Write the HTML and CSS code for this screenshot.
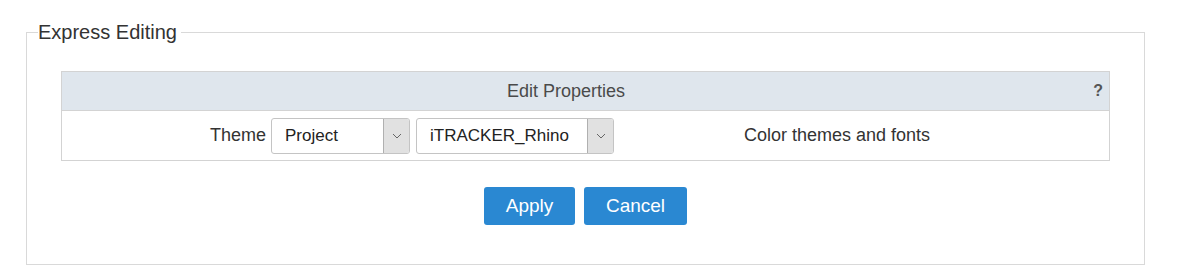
FILE: index.html
```html
<!DOCTYPE html>
<html>
<head>
<meta charset="utf-8">
<link rel="stylesheet" href="styles.css">
</head>
<body>
<fieldset class="panel">
  <legend class="panel-title">Express Editing</legend>
  <div class="props">
    <div class="props-head">
      <span class="props-title">Edit Properties</span>
      <span class="help">?</span>
    </div>
    <div class="props-row">
      <div class="cell-label">Theme</div>
      <div class="cell-editor">
        <div class="dropdown dd-project"><span class="dd-text">Project</span><span class="dd-arrow"><svg width="10" height="6" viewBox="0 0 10 6"><path d="M1 1 L5 5 L9 1" fill="none" stroke="#666" stroke-width="1"/></svg></span></div>
        <div class="dropdown dd-theme"><span class="dd-text">iTRACKER_Rhino</span><span class="dd-arrow"><svg width="10" height="6" viewBox="0 0 10 6"><path d="M1 1 L5 5 L9 1" fill="none" stroke="#666" stroke-width="1"/></svg></span></div>
      </div>
      <div class="cell-desc">Color themes and fonts</div>
    </div>
  </div>
  <div class="actions">
    <button class="btn btn-apply">Apply</button>
    <button class="btn btn-cancel">Cancel</button>
  </div>
</fieldset>
</body>
</html>
```
FILE: styles.css
```css
html, body {
  margin: 0;
  padding: 0;
  background: #fff;
  font-family: "Liberation Sans", Arial, sans-serif;
  color: #333;
}
body {
  padding: 21px 0 0 26px;
  width: 1119px;
}
.panel {
  margin: 0;
  padding: 0 34px 0 34px;
  border: 1px solid #d9d9d9;
  min-width: 0;
  box-sizing: border-box;
  width: 1119px;
  height: 244px;
}
.panel-title {
  font-size: 20px;
  line-height: 23px;
  padding: 0 4px 0 0;
  margin-left: -23px;
  color: #333;
}
.props {
  margin-top: 27px;
  border: 1px solid #d3d3d3;
}
.props-head {
  height: 38px;
  background: #dfe6ed;
  display: flex;
  align-items: center;
  justify-content: center;
  position: relative;
  border-bottom: 1px solid #d3d3d3;
  padding-right: 39px;
}
.props-title {
  font-size: 18px;
  color: #4a4a4a;
}
.help {
  position: absolute;
  right: 6px;
  top: 10px;
  font-size: 16px;
  font-weight: bold;
  color: #555;
}
.props-row {
  height: 49px;
  display: grid;
  grid-template-columns: 209px 474px 1fr;
  align-items: center;
  font-size: 18px;
}
.cell-label {
  text-align: right;
  padding-right: 5px;
  color: #333;
}
.cell-editor {
  display: flex;
  gap: 6px;
}
.dropdown {
  height: 36px;
  box-sizing: border-box;
  border: 1px solid #c4c4c4;
  border-radius: 3px;
  display: flex;
  align-items: center;
  justify-content: space-between;
  background: #fff;
  overflow: hidden;
}
.dd-project { width: 139px; }
.dd-theme { width: 198px; }
.dd-text {
  padding-left: 13px;
  font-size: 17px;
  color: #222;
}
.dd-arrow {
  width: 25px;
  height: 100%;
  background: #e1e1e1;
  border-left: 1px solid #b0b0b0;
  display: flex;
  align-items: center;
  justify-content: center;
}
.cell-desc {
  color: #333;
  padding-left: 0;
  margin-left: -1px;
}
.actions {
  display: flex;
  justify-content: center;
  gap: 9px;
  margin-top: 26px;
}
.btn {
  height: 38px;
  border: none;
  border-radius: 3px;
  background: #2a88d2;
  color: #fff;
  font-family: "Liberation Sans", Arial, sans-serif;
  font-size: 19px;
  padding: 0;
}
.btn-apply { width: 91px; }
.btn-cancel { width: 103px; }
```
